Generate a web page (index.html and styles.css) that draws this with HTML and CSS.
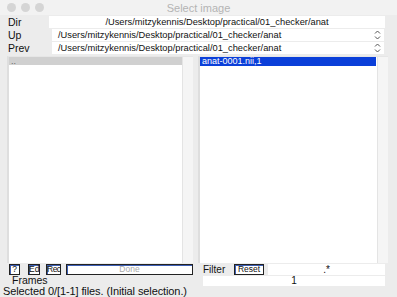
FILE: index.html
```html
<!DOCTYPE html>
<html>
  <head>
    <title>Select image</title>
    <link rel="stylesheet" href="styles.css">
  </head>
  <body>
    <div id="win">
      <div id="titlebar">
        <div class="lights"><span></span><span></span><span></span></div>
        <div class="title">Select image</div>
        <div></div>
      </div>
      <div class="row">
        <div class="label">Dir</div>
        <div class="field center path">/Users/mitzykennis/Desktop/practical/01_checker/anat</div>
      </div>
      <div class="row">
        <div class="label">Up</div>
        <div class="field popup"><span class="path">/Users/mitzykennis/Desktop/practical/01_checker/anat</span>
          <svg class="arrows" viewBox="0 0 7 10"><path d="M1 3.5 3.5 1 6 3.5M1 6.5 3.5 9 6 6.5" fill="none" stroke="#555" stroke-width="1"/></svg>
        </div>
      </div>
      <div class="row">
        <div class="label">Prev</div>
        <div class="field popup"><span class="path">/Users/mitzykennis/Desktop/practical/01_checker/anat</span>
          <svg class="arrows" viewBox="0 0 7 10"><path d="M1 3.5 3.5 1 6 3.5M1 6.5 3.5 9 6 6.5" fill="none" stroke="#555" stroke-width="1"/></svg>
        </div>
      </div>
      <div id="lists">
        <div class="pane">
          <div class="list">
            <div class="item gray">..</div>
          </div>
          <div class="scroll"></div>
        </div>
        <div class="pane">
          <div class="list">
            <div class="item blue">anat-0001.nii,1</div>
          </div>
          <div class="scroll"></div>
        </div>
      </div>
      <div id="bottom">
        <div class="half">
          <div class="btnrow">
            <span class="btn q">?</span>
            <span class="btn ed">Ed</span>
            <span class="btn rec">Rec</span>
            <span class="btn done">Done</span>
          </div>
          <div class="frames">Frames</div>
        </div>
        <div class="half">
          <div class="btnrow">
            <span class="flabel">Filter</span>
            <span class="btn reset">Reset</span>
            <span class="field center">.*</span>
          </div>
          <div class="field center num">1</div>
        </div>
      </div>
      <div id="status">Selected 0/[1-1] files. (Initial selection.)</div>
    </div>
  </body>
</html>
```
FILE: styles.css
```css
html, body {margin:0; height:100%;}
body {background:#ececec; font-family:"Liberation Sans",Arial,sans-serif; font-size:10px; color:#111;}
#win {width:397px; height:297px; display:flex; flex-direction:column; overflow:hidden;}
#titlebar {height:15px; display:grid; grid-template-columns:1fr auto 1fr; align-items:center; background:#f2f2f2;}
.lights {display:flex; gap:5px; padding-left:7px;}
.lights span {width:9px; height:9px; border-radius:50%; background:#d5d5d5;}
.title {color:#b4b4b4; font-size:11px;}
.row {display:flex; align-items:center; height:12px; margin-top:1px;}
.label {width:41px; padding-left:8px; flex:none; font-size:10.5px;}
.field {background:#fff; flex:1; height:12px; line-height:12px; white-space:nowrap; overflow:hidden;}
.path {font-size:9.3px;}
.row .field {margin-right:12px;}
.center {text-align:center;}
.popup {margin-left:3px; padding-left:6px; display:flex; justify-content:space-between; align-items:center; margin-right:13px !important;}
.arrows {width:7px; height:10px; margin-right:3px; flex:none;}
#lists {display:flex; height:207px; margin-top:2px; gap:5px; padding:0 9px 0 7px;}
.pane {flex:1; display:flex; border-left:2px solid #dedede; border-top:1px solid #e6e6e6;}
.pane:first-child {flex:0 0 184px;}
.list {flex:1; background:#fff;}
.scroll {width:10px; background:#f5f5f5; border-left:1px solid #e4e4e4;}
.item {height:8px; line-height:8px; padding-left:2px; font-size:9px;}
.gray {background:#d0d0d0; color:#666;}
.blue {background:#0b3fd9; color:#fff; height:9px; line-height:9px; margin-right:1px;}
#bottom {display:flex; padding:1px 12px 0 9px; gap:10px;}
.half {flex:1; display:flex; flex-direction:column;}
.half:first-child {flex:0 0 184px;}
.btnrow {display:flex; align-items:center; height:11px;}
.btn {border:1px solid #222; background:#fff; height:9px; line-height:9px; font-size:8.5px; text-align:center; box-sizing:content-box; box-shadow:inset 1px 1px 0 #3d5fb5; flex:none; white-space:nowrap;}
.q {width:9px;}
.ed {width:10px; margin-left:8px;}
.rec {width:13px; margin-left:6px; letter-spacing:-0.5px;}
.done {flex:1; color:#aaa; margin-left:5px;}
.frames {padding-left:3px; height:11px; line-height:11px; font-size:10.5px;}
.flabel {width:31px;}
.reset {width:28px;}
.btnrow .field {height:11px; line-height:11px; margin-left:4px;}
.num {height:10px; line-height:10px; margin-top:1px;}
#status {padding-left:3px; height:11px; line-height:11px; font-size:11px; letter-spacing:-0.1px;}
```
